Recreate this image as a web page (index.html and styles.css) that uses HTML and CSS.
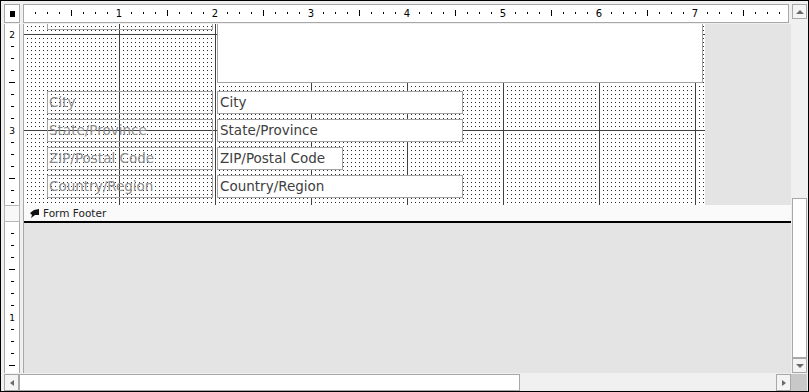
FILE: index.html
```html
<!DOCTYPE html>
<html>
<head>
<meta charset="utf-8">
<title>Form Design</title>
<link rel="stylesheet" href="styles.css">
</head>
<body>
<div class="window">
  <div class="corner"><span class="sq"></span></div>
  <div class="hruler">
    <span class="hnum">1</span><span class="hnum">2</span><span class="hnum">3</span><span class="hnum">4</span><span class="hnum">5</span><span class="hnum">6</span><span class="hnum">7</span><span class="hnum">8</span>
  </div>
  <div class="vscroll">
    <div class="sbtn"><span class="arr up"></span></div>
    <div class="strack"></div>
    <div class="vthumb"></div>
    <div class="sbtn"><span class="arr down"></span></div>
  </div>
  <div class="vruler">
    <div class="vr-detail">
      <span class="vcell first"><span class="vnum">2</span></span>
      <span class="vcell"><span class="vnum">3</span></span>
    </div>
    <div class="vr-bar"></div>
    <div class="vr-footer">
      <span class="vcell second"><span class="vnum">1</span></span>
    </div>
  </div>
  <div class="canvas">
    <div class="detail">
      <div class="grid">
        <div class="ctl label partial"></div>
        <div class="ctl bigbox"></div>
        <div class="ctl label r1">City</div>
        <div class="ctl text r1">City</div>
        <div class="ctl label r2">State/Province</div>
        <div class="ctl text r2">State/Province</div>
        <div class="ctl label r3">ZIP/Postal Code</div>
        <div class="ctl text r3 short">ZIP/Postal Code</div>
        <div class="ctl label r4">Country/Region</div>
        <div class="ctl text r4">Country/Region</div>
      </div>
      <div class="off"></div>
    </div>
    <div class="bar">
      <svg class="bar-icon" width="10" height="9" viewBox="0 0 10 9"><path d="M9 0 L9 6 L5 6 L1 9 L2 6 L0 4 L4 1 Z" fill="#111"/></svg>
      <span>Form Footer</span>
    </div>
    <div class="footer"></div>
  </div>
  <div class="hscroll">
    <div class="hbtn"><span class="arr left"></span></div>
    <div class="hthumb"></div>
    <div class="htrack"></div>
    <div class="hbtn"><span class="arr right"></span></div>
  </div>
  <div class="sizebox"></div>
</div>
</body>
</html>
```

FILE: styles.css
```css
body {
  margin: 0;
}

.window {
  width: 809px;
  height: 392px;
  box-sizing: border-box;
  border: 1px solid #000;
  padding: 3px 1px 0 3px;
  background: #f0f0f0;
  display: grid;
  grid-template-columns: 16px 3px 768px 16px;
  grid-template-rows: 19px 1px 349px 1px 17px;
  font-family: "DejaVu Sans", "Liberation Sans", sans-serif;
  overflow: hidden;
}

/* top-left corner selector */
.corner {
  grid-column: 1;
  grid-row: 1;
  background: #fff;
  border: 1px solid #a8a8a8;
  display: flex;
  align-items: center;
  justify-content: center;
}
.sq {
  width: 5px;
  height: 6px;
  background: #000;
}

/* horizontal ruler */
.hruler {
  grid-column: 3;
  grid-row: 1;
  margin-right: 2px;
  border: 1px solid #a8a8a8;
  background-color: #fff;
  background-image:
    linear-gradient(to right, #000 1px, transparent 1px),
    linear-gradient(to right, #000 1px, transparent 1px);
  background-size: 12px 2px, 96px 6px;
  background-position: 11px 7px, 47px 5px;
  background-repeat: repeat-x, repeat-x;
  display: flex;
  align-items: center;
  padding-left: 47px;
  overflow: hidden;
}
.hnum {
  flex: none;
  width: 96px;
  text-align: center;
  font-size: 10px;
  line-height: 10px;
  color: #000;
}
.hnum::first-letter {
  background: #fff;
}

/* vertical ruler */
.vruler {
  grid-column: 1;
  grid-row: 3;
  display: flex;
  flex-direction: column;
}
.vr-detail,
.vr-footer {
  border-left: 1px solid #a8a8a8;
  border-right: 1px solid #a8a8a8;
  background-color: #fff;
  background-image:
    linear-gradient(to bottom, #000 1px, transparent 1px),
    linear-gradient(to bottom, #000 1px, transparent 1px);
  background-repeat: repeat-y, repeat-y;
  display: flex;
  flex-direction: column;
  overflow: hidden;
}
.vr-detail {
  height: 181px;
  flex: none;
  background-size: 3px 12px, 6px 96px;
  background-position: 6px 10px, 4px 58px;
}
.vr-bar {
  height: 15px;
  flex: none;
  border: 1px solid #b8b8b8;
  background: #f8f8f8;
}
.vr-footer {
  flex: 1;
  background-size: 3px 12px, 6px 96px;
  background-position: 6px 11px, 4px 47px;
}
.vcell {
  flex: none;
  height: 96px;
  display: flex;
  align-items: center;
  justify-content: center;
}
.vcell.first {
  margin-top: -37px;
}
.vcell.second {
  margin-top: 48px;
}
.vnum {
  font-size: 9px;
  line-height: 8px;
  background: #fff;
  color: #000;
  padding: 1px 0;
}

/* design canvas */
.canvas {
  grid-column: 3;
  grid-row: 3;
  border-left: 1px solid #a8a8a8;
  display: flex;
  flex-direction: column;
  overflow: hidden;
}
.detail {
  height: 181px;
  flex: none;
  display: flex;
}
.grid {
  width: 681px;
  flex: none;
  position: relative;
  overflow: hidden;
  background-color: #2a2a2a;
  background-image:
    linear-gradient(to right, #404040 1px, transparent 1px),
    linear-gradient(to bottom, #404040 1px, transparent 1px),
    linear-gradient(to right, transparent 1px, #fff 1px),
    linear-gradient(to bottom, transparent 1px, #fff 1px);
  background-size: 96px 100%, 100% 96px, 4px 4px, 4px 4px;
  background-position: 95px 0, 0 10px, 3px 2px, 3px 2px;
}
.off {
  flex: 1;
  background: #e4e4e4;
}

.ctl {
  position: absolute;
  box-sizing: border-box;
  height: 23px;
  border: 1px solid #a3a3a3;
  font-size: 13.5px;
  line-height: 21px;
  white-space: nowrap;
  overflow: hidden;
}
.label {
  left: 23px;
  width: 166px;
  padding-left: 1px;
  color: #8c8c8c;
}
.text {
  left: 193px;
  width: 246px;
  padding-left: 2px;
  background: #fff;
  color: #404040;
}
.text.short {
  width: 126px;
}
.partial {
  top: -17px;
}
.bigbox {
  left: 193px;
  top: -1px;
  width: 486px;
  height: 60px;
  background: #fff;
}
.r1 { top: 67px; }
.r2 { top: 95px; }
.r3 { top: 123px; }
.r4 { top: 151px; }

/* section bar */
.bar {
  height: 16px;
  flex: none;
  border-bottom: 2px solid #000;
  background: #fafafa;
  display: flex;
  align-items: center;
  gap: 3px;
  padding-left: 6px;
  font-size: 10.5px;
  color: #222;
}
.bar-icon {
  display: block;
}
.footer {
  flex: 1;
  background: #e4e4e4;
}

/* scrollbars */
.vscroll {
  grid-column: 4;
  grid-row: 1 / 4;
  display: flex;
  flex-direction: column;
  padding-left: 1px;
}
.sbtn {
  height: 15px;
  flex: none;
  box-sizing: border-box;
  border: 1px solid #a8a8a8;
  background: #f4f4f4;
  display: flex;
  align-items: center;
  justify-content: center;
}
.strack {
  flex: 1;
}
.vthumb {
  height: 160px;
  flex: none;
  box-sizing: border-box;
  border: 1px solid #a8a8a8;
  background: #fff;
}
.hscroll {
  grid-column: 1 / 4;
  grid-row: 5;
  display: flex;
}
.hbtn {
  width: 15px;
  flex: none;
  box-sizing: border-box;
  border: 1px solid #a8a8a8;
  background: #f4f4f4;
  display: flex;
  align-items: center;
  justify-content: center;
}
.hthumb {
  width: 501px;
  flex: none;
  box-sizing: border-box;
  border: 1px solid #a8a8a8;
  background: #fff;
}
.htrack {
  flex: 1;
}
.sizebox {
  grid-column: 4;
  grid-row: 5;
  background: #c8c8c8;
}

.arr {
  width: 0;
  height: 0;
  display: block;
}
.arr.up {
  border-left: 4px solid transparent;
  border-right: 4px solid transparent;
  border-bottom: 4px solid #6a6a6a;
}
.arr.down {
  border-left: 4px solid transparent;
  border-right: 4px solid transparent;
  border-top: 4px solid #6a6a6a;
}
.arr.left {
  border-top: 3px solid transparent;
  border-bottom: 3px solid transparent;
  border-right: 4px solid #6a6a6a;
}
.arr.right {
  border-top: 3px solid transparent;
  border-bottom: 3px solid transparent;
  border-left: 4px solid #6a6a6a;
}
```
